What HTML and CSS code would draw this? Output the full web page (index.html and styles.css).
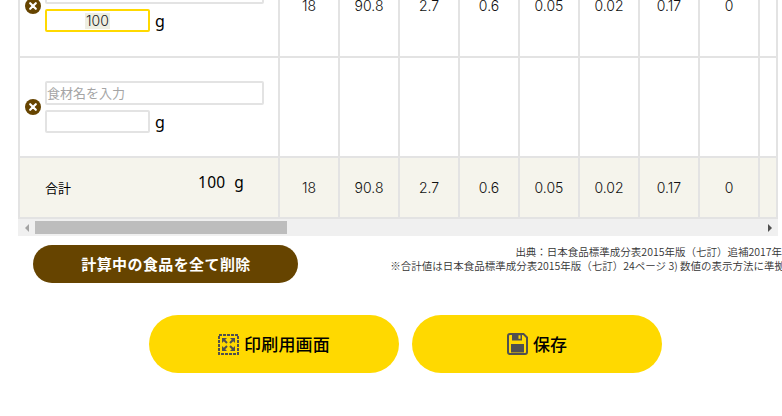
FILE: index.html
```html
<!DOCTYPE html>
<html lang="ja">
<head>
<meta charset="utf-8">
<title>計算</title>
<link rel="stylesheet" href="styles.css">
</head>
<body>
<main class="page">
  <section class="table">
    <div class="row row-first">
      <div class="cell name-cell">
        <span class="remove"><svg viewBox="0 0 16 16" width="16" height="16"><circle cx="8" cy="8" r="8" fill="#664400"/><path d="M5.2 5.2l5.6 5.6M10.8 5.2l-5.6 5.6" stroke="#fff" stroke-width="2.2" stroke-linecap="round"/></svg></span>
        <div class="fields">
          <input class="field field-name" type="text">
          <div class="amount"><div class="field field-qty field-active"><span class="value">100</span></div><span class="unit">g</span></div>
        </div>
      </div>
      <div class="cell">18</div><div class="cell">90.8</div><div class="cell">2.7</div><div class="cell">0.6</div><div class="cell">0.05</div><div class="cell">0.02</div><div class="cell">0.17</div><div class="cell">0</div><div class="cell cell-last"></div>
    </div>
    <div class="row row-empty">
      <div class="cell name-cell">
        <span class="remove"><svg viewBox="0 0 16 16" width="16" height="16"><circle cx="8" cy="8" r="8" fill="#664400"/><path d="M5.2 5.2l5.6 5.6M10.8 5.2l-5.6 5.6" stroke="#fff" stroke-width="2.2" stroke-linecap="round"/></svg></span>
        <div class="fields">
          <input class="field field-name" type="text" placeholder="食材名を入力">
          <div class="amount"><input class="field field-qty" type="text"><span class="unit">g</span></div>
        </div>
      </div>
      <div class="cell"></div><div class="cell"></div><div class="cell"></div><div class="cell"></div><div class="cell"></div><div class="cell"></div><div class="cell"></div><div class="cell"></div><div class="cell cell-last"></div>
    </div>
    <div class="row row-total">
      <div class="cell total-cell"><span class="total-label">合計</span><span class="total-amount">100&nbsp;&nbsp;g</span></div>
      <div class="cell">18</div><div class="cell">90.8</div><div class="cell">2.7</div><div class="cell">0.6</div><div class="cell">0.05</div><div class="cell">0.02</div><div class="cell">0.17</div><div class="cell">0</div><div class="cell cell-last"></div>
    </div>
    <div class="scrollbar">
      <span class="arrow arrow-left"></span>
      <div class="track"><div class="thumb"></div></div>
      <span class="arrow arrow-right"></span>
    </div>
  </section>

  <section class="below">
    <button class="clear-btn" type="button">計算中の食品を全て削除</button>
    <div class="notes">
      <p class="note">出典：日本食品標準成分表2015年版（七訂）追補2017年</p>
      <p class="note note-clipped">※合計値は日本食品標準成分表2015年版（七訂）24ページ 3) 数値の表示方法に準拠</p>
    </div>
  </section>

  <section class="actions">
    <button class="action-btn" type="button">
      <svg class="icon" viewBox="0 0 21 21" width="21" height="21"><rect x="1" y="1" width="19" height="19" fill="none" stroke="#505050" stroke-width="2" stroke-dasharray="3 1"/><g stroke="#505050" stroke-width="2" fill="none"><path d="M6 6l3 3M15 6l-3 3M6 15l3-3M15 15l-3-3"/></g><g fill="#505050"><path d="M4 4h5l-5 5z"/><path d="M17 4v5l-5-5z"/><path d="M4 17v-5l5 5z"/><path d="M17 17h-5l5-5z"/></g></svg>
      <span class="action-label action-label-wide">印刷用画面</span>
    </button>
    <button class="action-btn" type="button">
      <svg class="icon" viewBox="0 0 21 22" width="21" height="22"><path d="M3 1h13.500L20 4.500V19a2 2 0 0 1-2 2H3a2 2 0 0 1-2-2V3a2 2 0 0 1 2-2z" fill="none" stroke="#505050" stroke-width="2"/><rect x="5" y="1" width="10" height="6.500" fill="#505050"/><rect x="11.500" y="2.300" width="2" height="3.500" fill="#ffd900"/><rect x="4" y="11" width="13" height="8.500" fill="#505050"/></svg>
      <span class="action-label">保存</span>
    </button>
  </section>
</main>
</body>
</html>
```

FILE: styles.css
```css
* { box-sizing: border-box; }
html, body { margin: 0; padding: 0; background: #fff; overflow: hidden; height: 416px; }
body { font-family: "Noto Sans CJK JP", "Liberation Sans", sans-serif; color: #333; }
.page { margin-top: -44px; padding-left: 18px; width: 782px; }

.table { width: 760px; }
.row {
  display: flex;
  border-left: 2px solid #e3e3e3;
  border-right: 2px solid #e3e3e3;
  border-bottom: 2px solid #e3e3e3;
}
.row-first { height: 102px; }
.row-empty { height: 100px; }
.row-total { height: 61px; background: #f5f4ec; }

.cell {
  flex: 0 0 60px;
  display: flex;
  align-items: center;
  justify-content: center;
  border-right: 2px solid #e3e3e3;
  font-family: "Inter", "Noto Sans CJK JP", sans-serif;
  font-weight: 300;
  font-size: 14px;
  line-height: 12px;
  color: #111;
}
.cell-last { flex: 0 0 16px; border-right: 0; }

.name-cell {
  flex: 0 0 260px;
  justify-content: flex-start;
  padding-left: 5px;
  gap: 4px;
}
.remove { display: flex; width: 16px; height: 16px; }
.fields { display: flex; flex-direction: column; gap: 5px; }
.field {
  display: block;
  margin: 0;
  padding: 0 0 2px;
  border: 2px solid #e3e3e3;
  border-radius: 2px;
  background: #fff;
  font-family: "Noto Sans CJK JP", sans-serif;
  font-size: 13px;
  font-weight: 400;
  outline: none;
}
.field::placeholder { color: #a5a5a5; opacity: 1; }
.field-name { width: 219px; height: 24px; }
.field-qty { width: 105px; height: 23px; }
.field-active {
  border-color: #ffd900;
  padding: 0;
  display: flex;
  align-items: center;
  justify-content: center;
}
.value {
  background: #eeeee2;
  padding: 0 1px;
  font-family: "Inter", sans-serif;
  font-weight: 300;
  font-size: 14px;
  line-height: 16px;
  color: #222;
}
.amount { display: flex; align-items: center; gap: 5px; }
.unit {
  font-family: "Noto Sans", sans-serif;
  font-size: 16px;
  font-weight: 400;
  color: #000;
  line-height: 16px;
}

.total-cell {
  flex: 0 0 260px;
  justify-content: flex-start;
  padding-left: 25px;
}
.total-label {
  font-family: "Noto Sans CJK JP", sans-serif;
  font-weight: 400;
  font-size: 13px;
  line-height: 18px;
  color: #000;
}
.total-amount {
  margin-left: 127px;
  margin-bottom: 12px;
  font-family: "Noto Sans", sans-serif;
  font-weight: 400;
  font-size: 15.5px;
  line-height: 18px;
  letter-spacing: .3px;
  color: #000;
}

.scrollbar {
  display: flex;
  align-items: center;
  height: 17px;
  background: #f0f0f0;
}
.arrow { flex: 0 0 17px; display: flex; justify-content: center; }
.arrow::before {
  content: "";
  border-top: 4px solid transparent;
  border-bottom: 4px solid transparent;
}
.arrow-left::before { border-right: 4px solid #a3a3a3; }
.arrow-right::before { border-left: 4px solid #505050; }
.track { flex: 1; height: 13px; }
.thumb { width: 252px; height: 13px; background: #bdbdbd; }

.below {
  display: flex;
  justify-content: space-between;
  align-items: flex-start;
  margin-top: 9px;
  padding-left: 15px;
}
.clear-btn {
  width: 265px;
  height: 38px;
  border: 0;
  border-radius: 19px;
  background: #664400;
  color: #fff;
  font-family: "Noto Sans CJK JP", sans-serif;
  font-weight: 700;
  font-size: 15px;
  letter-spacing: .4px;
  padding: 0 0 2px 1px;
}
.notes {
  display: flex;
  flex-direction: column;
  align-items: flex-end;
  width: 400px;
  overflow: hidden;
  flex: none;
}
.note {
  flex: none;
  margin: 0;
  font-family: "Noto Sans CJK JP", sans-serif;
  font-size: 10.5px;
  line-height: 14px;
  font-weight: 350;
  color: #333;
  white-space: nowrap;
}
.note-clipped { margin-right: -3px; }

.actions {
  display: flex;
  gap: 13px;
  margin-top: 32px;
  padding-left: 131px;
}
.action-btn {
  display: flex;
  align-items: center;
  justify-content: center;
  gap: 5px;
  width: 250px;
  height: 58px;
  border: 0;
  border-radius: 29px;
  background: #ffd900;
  color: #000;
  font-family: "Noto Sans CJK JP", sans-serif;
  font-weight: 500;
  font-size: 17px;
  padding: 0;
}
.action-label { position: relative; top: -1px; }
.action-label-wide { letter-spacing: .2px; }
.icon { flex: none; }
```
